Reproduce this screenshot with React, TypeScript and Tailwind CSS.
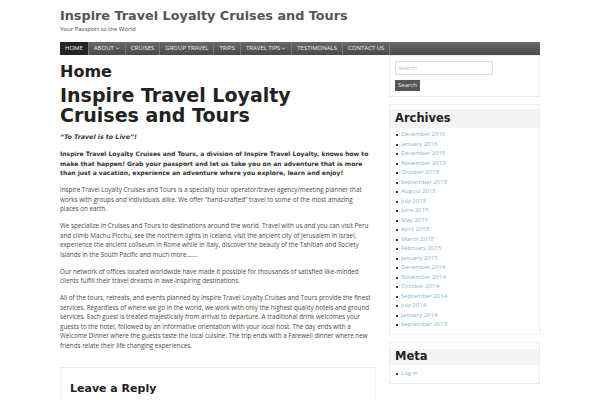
import { ChevronDown } from 'lucide-react'

const navItems = [
  { label: 'Home', active: true },
  { label: 'About', caret: true },
  { label: 'Cruises' },
  { label: 'Group Travel' },
  { label: 'Trips' },
  { label: 'Travel Tips', caret: true },
  { label: 'Testimonals' },
  { label: 'Contact Us' },
]

const archives = [
  'December 2016',
  'January 2016',
  'December 2015',
  'November 2015',
  'October 2015',
  'September 2015',
  'August 2015',
  'July 2015',
  'June 2015',
  'May 2015',
  'April 2015',
  'March 2015',
  'February 2015',
  'January 2015',
  'December 2014',
  'November 2014',
  'October 2014',
  'September 2014',
  'July 2014',
  'January 2014',
  'September 2013',
]

// line breaks follow the original page's wrapping
const paragraphs = [
  [
    'Inspire Travel Loyalty Cruises and Tours is a specialty tour operator/travel agency/meeting planner that',
    'works with groups and individuals alike. We offer “hand-crafted” travel to some of the most amazing',
    'places on earth.',
  ],
  [
    'We specialize in Cruises and Tours to destinations around the world. Travel with us and you can visit Peru',
    'and climb Machu Picchu, see the northern lights in Iceland, visit the ancient city of Jerusalem in Israel,',
    'experience the ancient coliseum in Rome while in Italy, discover the beauty of the Tahitian and Society',
    'Islands in the South Pacific and much more…….',
  ],
  [
    'Our network of offices located worldwide have made it possible for thousands of satisfied like-minded',
    'clients fulfill their travel dreams in awe-inspiring destinations.',
  ],
  [
    'All of the tours, retreats, and events planned by Inspire Travel Loyalty Cruises and Tours provide the finest',
    'services. Regardless of where we go in the world, we work with only the highest quality hotels and ground',
    'services. Each guest is treated majestically from arrival to departure. A traditional drink welcomes your',
    'guests to the hotel, followed by an informative orientation with your local host. The day ends with a',
    'Welcome Dinner where the guests taste the local cuisine. The trip ends with a Farewell dinner where new',
    'friends relate their life changing experiences.',
  ],
]

const heading = "font-['DejaVu_Sans',sans-serif] font-bold"

export default function App() {
  return (
    <div className="h-[400px] w-[600px] overflow-hidden bg-white font-['Open_Sans',sans-serif] text-[#555]">
      <div className="mx-[60px] w-[480px]">
        <header className="pt-[10px]">
          <h1 className={`${heading} text-[12.8px] leading-none text-[#555]`}>
            Inspire Travel Loyalty Cruises and Tours
          </h1>
          <p className="mt-[2px] text-[6px] leading-[9px] text-[#444]">Your Passport to the World</p>
        </header>

        <nav className="mt-[8px] flex h-[13px] bg-gradient-to-b from-[#6a6a6a] to-[#4a4a4a]">
          {navItems.map((item) => (
            <a
              key={item.label}
              className={`flex items-center gap-[1px] border-r border-[#7a7a7a] px-[5px] text-[6px] uppercase leading-none text-[#eee] ${
                item.active ? 'bg-[#262626]' : ''
              }`}
            >
              {item.label}
              {item.caret && <ChevronDown className="h-[5px] w-[5px]" strokeWidth={4} />}
            </a>
          ))}
        </nav>

        <div className="flex gap-[13px]">
          <main className="w-[316px]">
            <h2 className={`${heading} mt-[9px] text-[16px] leading-none text-[#222]`}>Home</h2>
            <h1 className={`${heading} mt-[5.5px] text-[19px] leading-[20px] text-[#222]`}>
              Inspire Travel Loyalty Cruises and Tours
            </h1>

            <div className="mt-[7px] text-[6.3px] leading-[9.5px] text-[#4a4a4a]">
              <p className={`${heading} mb-[7.5px] text-[6.3px] italic text-[#333]`}>“To Travel is to Live”!</p>
              <p className={`${heading} mb-[7.5px] text-[6.05px] text-[#333]`}>
                Inspire Travel Loyalty Cruises and Tours, a division of Inspire Travel Loyalty, knows how to
                make that happen! Grab your passport and let us take you on an adventure that is more
                than just a vacation, experience an adventure where you explore, learn and enjoy!
              </p>
              {paragraphs.map((lines, i) => (
                <p key={i} className="mb-[7.5px] whitespace-nowrap">
                  {lines.map((line) => (
                    <span key={line} className="block">
                      {line}
                    </span>
                  ))}
                </p>
              ))}
            </div>

            <section className="mt-[16.5px] h-[60px] border border-[#eee] px-[9px] pt-[15px]">
              <h3 className={`${heading} text-[11px] leading-none text-[#222]`}>Leave a Reply</h3>
            </section>
          </main>

          <aside className="w-[151px]">
            <div className="border border-[#eee] px-[5px] pb-[5px] pt-[5px]">
              <input
                placeholder="Search"
                className="block h-[14px] w-[98px] border border-[#ddd] px-[2px] text-[6px] text-[#555] placeholder-[#bbb] outline-none"
              />
              <button className="mt-[5px] block h-[11px] bg-[#555] px-[3px] text-[6px] leading-none text-[#eee]">
                Search
              </button>
            </div>

            <div className="mt-[7px] border border-[#eee] pb-[4px] pt-[4px]">
              <div className="flex h-[19px] items-center bg-[#f4f4f4] px-[5px]">
                <h3 className={`${heading} text-[11.5px] leading-none text-[#222]`}>Archives</h3>
              </div>
              <ul className="mt-[2.5px] pl-[6px] text-[6px] leading-[9.5px]">
                {archives.map((a) => (
                  <li key={a} className="flex items-center gap-[3px]">
                    <span className="h-[2px] w-[2px] bg-[#333]" />
                    <a className="text-[#80b9cb]">{a}</a>
                  </li>
                ))}
              </ul>
            </div>

            <div className="mt-[7px] border border-[#eee] pb-[4px] pt-[6px]">
              <div className="flex h-[16px] items-center bg-[#f4f4f4] px-[5px]">
                <h3 className={`${heading} text-[11.5px] leading-none text-[#222]`}>Meta</h3>
              </div>
              <ul className="mt-[4.5px] pl-[6px] text-[6px] leading-[9.5px]">
                <li className="flex items-center gap-[3px]">
                  <span className="h-[2px] w-[2px] bg-[#333]" />
                  <a className="text-[#80b9cb]">Log in</a>
                </li>
              </ul>
            </div>
          </aside>
        </div>
      </div>
    </div>
  )
}
